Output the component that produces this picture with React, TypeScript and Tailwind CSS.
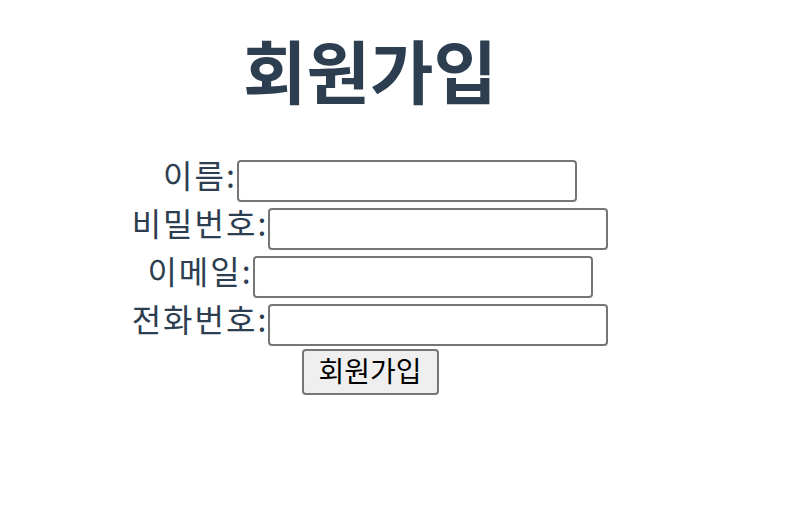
import React from "react";

const font = { fontFamily: '"Noto Sans CJK KR", "Noto Sans", sans-serif' };

function Row({ label }: { label: string }) {
  return (
    <div className="flex h-[48px] items-center justify-center">
      <label className="mb-[14px] text-[32px] leading-none tracking-[2px] text-[#2c3e50]">{label}:</label>
      <input
        type="text"
        className="h-[42px] w-[340px] rounded-[4px] border-2 border-[#767676] bg-white"
      />
    </div>
  );
}

export default function App() {
  return (
    <div className="min-h-[512px] w-[810px] bg-white" style={font}>
      <div className="flex w-[740px] flex-col items-center pt-[29px]">
        <h1 className="text-[69px] font-bold leading-[80px] text-[#2c3e50]">회원가입</h1>
        <div className="mt-[48px] flex w-full flex-col items-stretch">
          <Row label="이름" />
          <Row label="비밀번호" />
          <Row label="이메일" />
          <Row label="전화번호" />
        </div>
        <button className="h-[46px] w-[137px] rounded-[4px] border-2 border-[#767676] bg-[#efefef] pb-[4px] text-[28px] leading-none text-black">
          회원가입
        </button>
      </div>
    </div>
  );
}
